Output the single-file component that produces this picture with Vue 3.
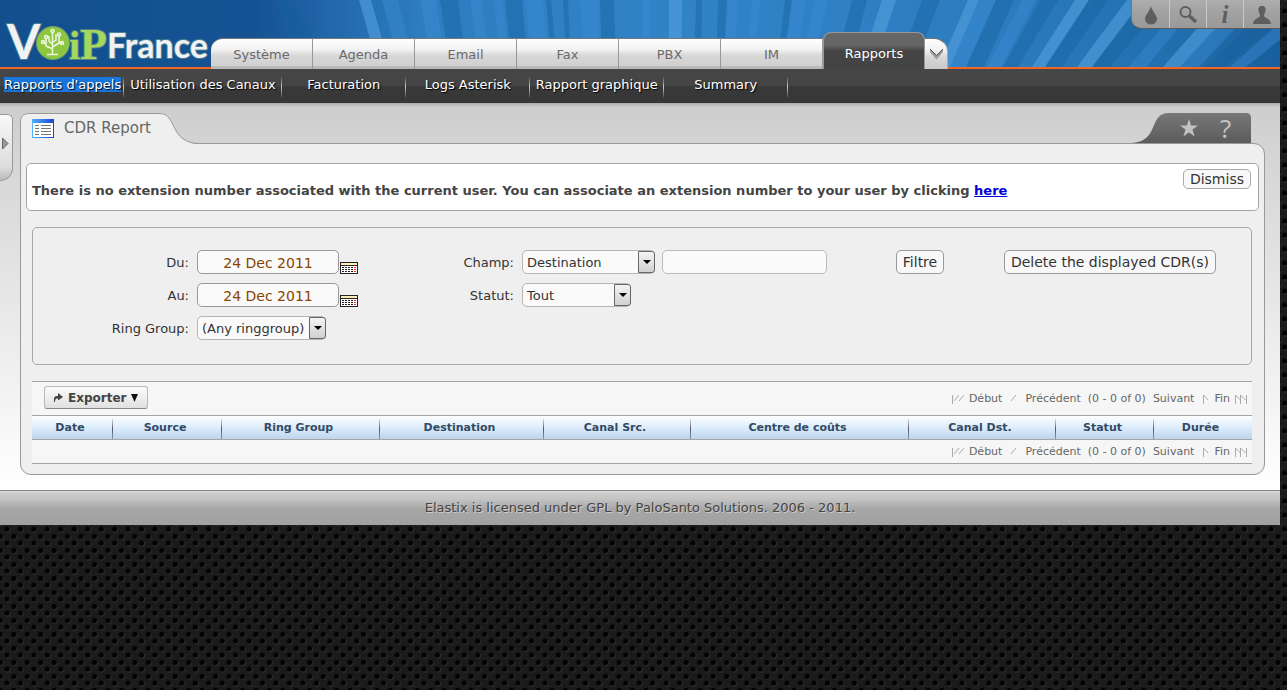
<script setup>
import { ref } from 'vue'

const tabs = ['Système', 'Agenda', 'Email', 'Fax', 'PBX', 'IM', 'Rapports']
const activeTab = 'Rapports'
const subItems = ["Rapports d'appels", 'Utilisation des Canaux', 'Facturation', 'Logs Asterisk', 'Rapport graphique', 'Summary']
const columns = [
  { name: 'Date', w: 81 },
  { name: 'Source', w: 109 },
  { name: 'Ring Group', w: 158 },
  { name: 'Destination', w: 164 },
  { name: 'Canal Src.', w: 147 },
  { name: 'Centre de coûts', w: 218 },
  { name: 'Canal Dst.', w: 147 },
  { name: 'Statut', w: 98 },
  { name: 'Durée', w: 98 }
]
const total = columns.reduce((sum, c) => sum + c.w, 0)

// Rays of the banner: left/right edge at the top, left/right edge at the bottom, tone
const rays = [
  [275, 292, 312, 330, 'd'], [359, 371, 378, 390, 'b'], [382, 398, 400, 414, 'l'],
  [420, 436, 432, 446, 'l'], [440, 458, 450, 466, 'd'], [470, 482, 480, 490, 'l'], [494, 502, 502, 510, 'l'],
  [505, 522, 512, 528, 'd'], [525, 543, 532, 549, 'l'], [546, 551, 552, 557, 'd'], [563, 568, 567, 571, 'd'],
  [580, 598, 584, 600, 'l'], [600, 614, 602, 616, 'd'], [643, 650, 643, 650, 'l'], [669, 682, 669, 681, 'b'],
  [696, 702, 694, 701, 'd'], [718, 727, 716, 723, 'd'], [728, 738, 724, 734, 'l'], [752, 760, 746, 754, 'l'],
  [785, 792, 777, 783, 'd'], [792, 806, 783, 797, 'l'], [815, 828, 800, 812, 'l'], [852, 867, 835, 850, 'd'],
  [882, 896, 860, 874, 'b'], [922, 940, 898, 914, 'd'], [968, 979, 939, 950, 'b'], [979, 996, 950, 966, 'l'],
  [996, 1014, 966, 984, 'd'], [1022, 1036, 987, 1001, 'l'], [1040, 1058, 1003, 1018, 'd'],
  [1075, 1089, 1032, 1045, 'b'], [1089, 1108, 1045, 1062, 'd'], [1127, 1143, 1077, 1092, 'b'],
  [1143, 1166, 1092, 1110, 'd'], [1185, 1202, 1129, 1146, 'l'], [1222, 1242, 1163, 1180, 'b'],
  [1242, 1262, 1180, 1199, 'l'], [1276, 1300, 1206, 1224, 'd'], [1305, 1330, 1230, 1246, 'l'], [1330, 1370, 1246, 1280, 'd']
]
const points = (r) => `${r[0]},0 ${r[1]},0 ${r[3]},67 ${r[2]},67`

const from = ref('24 Dec 2011')
const to = ref('24 Dec 2011')
const ringGroup = ref('(Any ringgroup)')
const field = ref('Destination')
const pattern = ref('')
const status = ref('Tout')
</script>

<template>
  <div class="backdrop">
    <svg class="mesh" aria-hidden="true">
      <defs>
        <pattern id="holes" width="13.45" height="14" patternUnits="userSpaceOnUse" y="522">
          <rect width="14" height="14" fill="#1b1b1b" />
          <circle cx="7.7" cy="7.7" r="2.8" fill="#303030" />
          <circle cx="7" cy="7" r="2.6" fill="#020202" />
          <circle cx="1" cy="1" r="2.8" fill="#303030" />
          <circle cx="0.3" cy="0.3" r="2.6" fill="#020202" />
          <circle cx="13.7" cy="0.3" r="2.6" fill="#020202" />
          <circle cx="0.3" cy="14.3" r="2.6" fill="#020202" />
          <circle cx="13.7" cy="14.3" r="2.6" fill="#020202" />
        </pattern>
      </defs>
      <rect width="100%" height="100%" fill="url(#holes)" />
    </svg>

    <div class="page">
      <header class="banner">
        <svg class="rays" viewBox="0 0 1280 67" preserveAspectRatio="none" aria-hidden="true">
          <polygon v-for="(r, i) in rays" :key="i" :points="points(r)" :class="r[4]" />
        </svg>
        <h1 class="logo">
          <svg width="211" height="67" viewBox="0 0 211 67" role="img" aria-label="VoiP France">
            <circle cx="53" cy="43" r="17" fill="#6d9f74" />
            <circle cx="53" cy="43" r="16" fill="#8dc63f" />
            <g fill="none" stroke="#eef7e2" stroke-width="1.5">
              <path d="M52.500 54V32M47 54.500H58M52.500 49L46 46V38M46 43H43M52.500 47L59 43V36M59 43H62M49 36V41L52 44M56 34V40L53 42" />
              <circle cx="52.500" cy="31" r="1.500" /><circle cx="43" cy="42" r="1.500" /><circle cx="46" cy="37" r="1.500" />
              <circle cx="59" cy="34.500" r="1.500" /><circle cx="62" cy="43" r="1.500" />
            </g>
            <g class="logo-text">
              <text x="7" y="59" class="lv">V</text>
              <text x="69" y="59" class="li">i</text>
              <text x="80" y="59" class="lp">P</text>
              <text x="107" y="58" class="lf">France</text>
            </g>
          </svg>
        </h1>
        <nav class="tabs">
          <a v-for="t in tabs" :key="t" href="#" class="tab" :class="{ active: t === activeTab }">{{ t }}</a>
          <button class="more" aria-label="Plus">
            <svg width="15" height="13" viewBox="0 0 15 13"><path d="M1 1V4L7.500 11.500L14 4V1L7.500 7.500Z" fill="#999" /><path d="M1 1L7.500 7.500L14 1" fill="none" stroke="#555" /></svg>
          </button>
        </nav>
        <div class="tools">
          <button aria-label="Thème"><svg width="20" height="22" viewBox="0 0 20 22"><path d="M10 2C11 7 16 11 16 15A6 5.500 0 0 1 4 15C4 11 9 7 10 2Z" fill="#5e5e5e" /></svg></button>
          <button aria-label="Rechercher"><svg width="20" height="22" viewBox="0 0 20 22"><circle cx="7.500" cy="8" r="5" fill="none" stroke="#5e5e5e" stroke-width="2" /><path d="M11.500 12L18 18" stroke="#5e5e5e" stroke-width="3.500" /></svg></button>
          <button aria-label="Informations"><span class="info">i</span></button>
          <button aria-label="Utilisateur"><svg width="20" height="22" viewBox="0 0 20 22"><path d="M10 2C13 2 14 4 13.500 7C13 9 12 10 12 12C13 14 19 15 19 20H1C1 15 7 14 8 12C8 10 7 9 6.500 7C6 4 7 2 10 2Z" fill="#5e5e5e" /></svg></button>
        </div>
      </header>

      <nav class="subnav">
        <a v-for="(s, i) in subItems" :key="s" href="#"><span :class="{ selected: i === 0 }">{{ s }}</span></a>
      </nav>

      <main class="body">
        <button class="handle" aria-label="Ouvrir le panneau">
          <svg width="7" height="13" viewBox="0 0 7 13"><path d="M.5 1L6 6.500L.5 12Z" fill="#999" stroke="#666" /></svg>
        </button>

        <section class="module">
          <div class="title">
            <svg class="title-shape" width="180" height="32" viewBox="0 0 180 32" aria-hidden="true">
              <path d="M0 32V9Q0 0 9 0H140C157 0 149 31 180 31V32Z" fill="#efefef" />
              <path d="M.5 32V9Q.5 .5 9 .5H140C157 .5 149 30.500 180 30.500" fill="none" stroke="#999" />
            </svg>
            <svg class="list-icon" width="22" height="19" viewBox="0 0 22 19" aria-hidden="true">
              <defs><linearGradient id="bar"><stop stop-color="#55b0f8" /><stop offset="1" stop-color="#1446d8" /></linearGradient></defs>
              <rect x=".5" y=".5" width="21" height="18" fill="#fff" stroke="url(#bar)" />
              <rect width="22" height="4" fill="url(#bar)" />
              <path d="M3 6.500H7M9 6.500H19M3 9.500H7M9 9.500H19M3 12.500H7M9 12.500H19M3 15.500H7M9 15.500H19" stroke="#777" />
            </svg>
            <h2>CDR Report</h2>
            <div class="actions">
              <svg class="actions-shape" width="119" height="30" viewBox="0 0 119 30" aria-hidden="true">
                <defs><linearGradient id="dark" x2="0" y2="1"><stop stop-color="#777" /><stop offset="1" stop-color="#5c5c5c" /></linearGradient></defs>
                <path d="M0 30C28 28 16 0 37 0H114Q119 0 119 5V30Z" fill="url(#dark)" />
              </svg>
              <button aria-label="Favori"><svg width="18" height="18" viewBox="0 0 18 18"><path d="M9 0L11.200 6.600H18L12.500 10.600L14.600 17.400L9 13.200L3.400 17.400L5.500 10.600L0 6.600H6.800Z" fill="#c2c2c2" /></svg></button>
              <button aria-label="Aide"><span class="help">?</span></button>
            </div>
          </div>

          <div class="panel">
            <div class="notice">
              <p>There is no extension number associated with the current user. You can associate an extension number to your user by clicking <a href="#">here</a></p>
              <button class="btn dismiss">Dismiss</button>
            </div>

            <form class="filter" @submit.prevent>
              <label class="c1" for="from">Du:</label>
              <div class="c2">
                <input id="from" v-model="from" class="date" type="text">
                <button class="cal" type="button" aria-label="Calendrier Du"><svg width="18" height="12" viewBox="0 0 18 12"><rect x=".5" y=".5" width="17" height="11" fill="#fff" stroke="#222" /><rect x="1" y="1" width="16" height="2" fill="#ffeebb" /><path d="M1 3.500H17" stroke="#222" /><path d="M2 5.500H14M2 7.500H14M2 9.500H14" stroke="#222" stroke-dasharray="2 1" /><path d="M14 5.500H16M14 7.500H16M14 9.500H16" stroke="#f22" /></svg></button>
              </div>
              <label class="c3" for="field">Champ:</label>
              <div class="c4">
                <span class="select wide"><select id="field" v-model="field"><option>Destination</option></select><i /></span>
                <input v-model="pattern" class="pattern" type="text" aria-label="Valeur">
              </div>
              <div class="c5"><button class="btn">Filtre</button></div>
              <div class="c6"><button class="btn" type="button">Delete the displayed CDR(s)</button></div>

              <label class="c1" for="to">Au:</label>
              <div class="c2">
                <input id="to" v-model="to" class="date" type="text">
                <button class="cal" type="button" aria-label="Calendrier Au"><svg width="18" height="12" viewBox="0 0 18 12"><rect x=".5" y=".5" width="17" height="11" fill="#fff" stroke="#222" /><rect x="1" y="1" width="16" height="2" fill="#ffeebb" /><path d="M1 3.500H17" stroke="#222" /><path d="M2 5.500H14M2 7.500H14M2 9.500H14" stroke="#222" stroke-dasharray="2 1" /><path d="M14 5.500H16M14 7.500H16M14 9.500H16" stroke="#f22" /></svg></button>
              </div>
              <label class="c3" for="status">Statut:</label>
              <div class="c4"><span class="select small"><select id="status" v-model="status"><option>Tout</option></select><i /></span></div>

              <label class="c1" for="ring">Ring Group:</label>
              <div class="c2"><span class="select medium"><select id="ring" v-model="ringGroup"><option>(Any ringgroup)</option></select><i /></span></div>
            </form>

            <div class="grid">
              <div class="bar top">
                <button class="export">
                  <svg width="10" height="9" viewBox="0 0 10 9"><path d="M1 9V6Q1 3 4 3H5V0L10 4L5 7.500V5.500H4Q2 5.500 2 9Z" fill="#444" /></svg>
                  Exporter
                  <svg width="7" height="8" viewBox="0 0 7 8"><path d="M0 0H7L3.500 8Z" fill="#111" /></svg>
                </button>
                <div class="pager">
                  <svg width="13" height="10" viewBox="0 0 13 10"><path d="M.5 1V10M2 7L7 1M7 7L12 1" fill="none" stroke="#aaa" /></svg>
                  <a href="#" class="first">Début</a>
                  <svg width="7" height="10" viewBox="0 0 7 10"><path d="M1 7L6 1" fill="none" stroke="#aaa" /></svg>
                  <span class="range"><a href="#">Précédent</a><span>(0 - 0 of 0)</span><a href="#">Suivant</a></span>
                  <svg class="next" width="6" height="10" viewBox="0 0 6 10"><path d="M.5 10V1L5 6" fill="none" stroke="#aaa" /></svg>
                  <a href="#" class="last">Fin</a>
                  <svg width="12" height="10" viewBox="0 0 12 10"><path d="M.5 10V1L5.500 6V10M5.500 6V1L10.500 6M11.500 1V10" fill="none" stroke="#aaa" /></svg>
                </div>
              </div>
              <table>
                <thead>
                  <tr><th v-for="c in columns" :key="c.name" scope="col" :style="{ width: (c.w / total) * 100 + '%' }">{{ c.name }}</th></tr>
                </thead>
              </table>
              <div class="bar bottom">
                <div class="pager">
                  <svg width="13" height="10" viewBox="0 0 13 10"><path d="M.5 1V10M2 7L7 1M7 7L12 1" fill="none" stroke="#aaa" /></svg>
                  <a href="#" class="first">Début</a>
                  <svg width="7" height="10" viewBox="0 0 7 10"><path d="M1 7L6 1" fill="none" stroke="#aaa" /></svg>
                  <span class="range"><a href="#">Précédent</a><span>(0 - 0 of 0)</span><a href="#">Suivant</a></span>
                  <svg class="next" width="6" height="10" viewBox="0 0 6 10"><path d="M.5 10V1L5 6" fill="none" stroke="#aaa" /></svg>
                  <a href="#" class="last">Fin</a>
                  <svg width="12" height="10" viewBox="0 0 12 10"><path d="M.5 10V1L5.500 6V10M5.500 6V1L10.500 6M11.500 1V10" fill="none" stroke="#aaa" /></svg>
                </div>
              </div>
            </div>
          </div>
        </section>
      </main>

      <footer class="footer">Elastix is licensed under GPL by PaloSanto Solutions. 2006 - 2011.</footer>
    </div>
  </div>
</template>

<style>
html, body { background: #1b1b1b; }
</style>

<style scoped>
.backdrop, .backdrop * { box-sizing: border-box; }
.backdrop { position: relative; min-height: 100vh; font-family: Verdana, "DejaVu Sans", sans-serif; font-size: 13px; color: #333; }
.mesh { position: absolute; inset: 0; width: 100%; height: 100%; }
.page { position: relative; margin-right: 7px; }
button, input, select { font-family: inherit; margin: 0; }
button { padding: 0; border: 0; background: none; cursor: pointer; color: inherit; }
a { color: inherit; text-decoration: none; }
svg { display: block; flex: none; }

.banner { position: relative; display: flex; align-items: flex-end; height: 69px; border-bottom: 2px solid #f26522; background: linear-gradient(90deg, #134f8e 0, #155394 20%, #2268ab 26%, #2d7dc0 33%, #3183c8 54%, #2c7cbf 78%, #2370b0 90%, #1c619e 100%); }
.rays { position: absolute; inset: 0; width: 100%; height: 67px; }
.rays .l { fill: #3d8fd6; opacity: .4; }
.rays .b { fill: #55a0de; opacity: .6; }
.rays .d { fill: #14609c; opacity: .4; }
.logo { position: relative; margin: 0; width: 211px; height: 67px; }
.logo svg { overflow: visible; }
.logo-text { paint-order: stroke; stroke: #4d8090; stroke-width: 2px; stroke-linejoin: round; }
.lv { font: 700 48px Lato, sans-serif; fill: #f0f2f4; }
.li { font: 700 40px "Liberation Serif", serif; fill: #a5d75c; }
.lp { font: 700 44px "Liberation Serif", serif; fill: #a5d75c; }
.lf { font: 700 34px Lato, sans-serif; fill: #f0f2f4; }

.tabs { position: relative; display: flex; align-items: flex-end; margin-bottom: -2px; }
.tab { width: 102px; height: 31px; line-height: 32px; text-align: center; color: #6a6a6a; background: linear-gradient(#fff 0, #f2f2f2 35%, #d8d8d8 55%, #d0d0d0 90%, #b8b8b8 92%); border-top: 1px solid #777; border-right: 1px solid #999; }
.tab:first-child { border-top-left-radius: 12px; }
.tab.active { height: 37px; line-height: 42px; color: #fff; background: linear-gradient(#686868 0, #646464 35%, #444 50%); border: 1px solid #999; border-bottom: 0; border-radius: 8px 8px 0 0; }
.more { width: 23px; height: 31px; display: flex; align-items: center; justify-content: center; background: linear-gradient(#fff 0, #f2f2f2 35%, #d8d8d8 60%, #c8c8c8); border-top: 1px solid #777; border-right: 1px solid #aaa; border-top-right-radius: 14px; }
.tools { position: absolute; top: 0; right: 0; display: flex; height: 29px; background: linear-gradient(#adadad, #a2a2a2 45%, #999); border-left: 1px solid #777; border-bottom: 1px solid #5a5a5a; border-bottom-left-radius: 10px; }
.tools button { width: 38px; display: flex; align-items: center; justify-content: center; padding-top: 1px; border-right: 1px solid #c8c8c8; }
.tools button:nth-child(n+2) { width: 37px; }
.tools button:last-child { width: 36px; border: 0; }
.info { font: italic 700 25px/26px "Liberation Serif", serif; color: #5e5e5e; }

.subnav { display: flex; height: 34px; background: linear-gradient(#464646, #444 48%, #393939 52%, #363636); color: #fff; text-shadow: 1px 1px 1px #000; }
.subnav a { position: relative; min-width: 124px; padding: 8px 6px 0; line-height: 16px; text-align: center; white-space: nowrap; }
.subnav a:first-child { padding: 8px 3px 0 4px; }
.subnav a::after { content: ""; position: absolute; right: 0; top: 7px; width: 1px; height: 22px; background: linear-gradient(#444, #ccc 50%, #444); }
.selected { background: #1a75dc; }

.body { position: relative; padding: 10px 15px 15px 20px; border-bottom: 1px solid #808080; background: linear-gradient(#aaa 0, #cdcdcd 4px, #d2d2d2 30px, #fff 100%); }
.handle { position: absolute; left: 0; top: 11px; width: 13px; height: 67px; padding: 0 0 8px 2px; background: linear-gradient(#f8f8f8, #ddd 80%, #bbb); border: 1px solid #999; border-left: 0; border-radius: 0 6px 14px 0; }
.title { position: relative; display: flex; align-items: center; height: 30px; padding: 0 14px 0 12px; }
.title-shape { position: absolute; left: 0; top: 0; z-index: 1; }
.list-icon { position: relative; z-index: 2; }
.title h2 { position: relative; z-index: 2; margin: 0 auto 0 10px; font-size: 15px; font-weight: 400; line-height: 20px; color: #666; }
.actions { position: relative; display: flex; align-items: center; width: 119px; height: 30px; padding-left: 48px; gap: 22px; }
.actions-shape { position: absolute; left: 0; top: 0; }
.actions button { position: relative; }
.help { display: block; font: 26px/28px "Noto Sans", sans-serif; color: #c2c2c2; }

.panel { padding: 19px 5px 10px; background: #efefef; border: 1px solid #999; border-radius: 0 11px 11px 11px; }
.notice { display: flex; align-items: flex-start; justify-content: space-between; height: 48px; padding: 5px 7px 5px 5px; background: #fff; border: 1px solid #a5a5a5; border-radius: 5px; }
.notice p { margin: 12px 0 0; font-weight: 700; line-height: 19px; color: #444; }
.notice a { color: #0000dd; text-decoration: underline; }
.btn { height: 24px; padding: 0 6px; font-size: 14px; color: #333; background: #f8f8f8; border: 1px solid #999; border-radius: 5px; white-space: nowrap; }
.dismiss { height: 20px; line-height: 18px; border-color: #aaa; }

.filter { display: grid; grid-template-columns: 156fr 228fr 81fr 338fr 104fr 260fr; grid-auto-rows: 24px; gap: 9px 8px; align-items: center; margin: 16px 7px 0 6px; padding: 22px 11px 24px 0; border: 1px solid #a8a8a8; border-radius: 5px; }
.c1 { grid-column: 1; text-align: right; }
.c2 { grid-column: 2; display: flex; align-items: flex-end; gap: 1px; }
.c3 { grid-column: 3; text-align: right; }
.c4 { grid-column: 4; display: flex; gap: 7px; }
.c5 { grid-column: 5; text-align: center; }
.c6 { grid-column: 6; text-align: center; }
.filter input { height: 24px; background: #fafafa; border: 1px solid #999; border-radius: 5px; }
.filter .date { width: 142px; padding: 1px 0 0; text-align: center; font-size: 14px; color: #884400; }
.filter .pattern { width: 165px; border-color: #bbb; }
.select { position: relative; display: block; height: 24px; }
.select select { appearance: none; width: 100%; height: 24px; padding: 0 20px 0 4px; font-size: 13px; color: #333; background: #fafafa; border: 1px solid #b5b5b5; border-radius: 5px; }
.select i { position: absolute; right: 0; top: 1px; width: 17px; height: 22px; background: linear-gradient(#f4f4f4, #d0d0d0); border: 1px solid #666; border-radius: 0 3px 3px 0; pointer-events: none; }
.select i::after { content: ""; position: absolute; left: 4px; top: 8px; border: 4px solid transparent; border-top-color: #000; border-bottom: 0; }
.wide { width: 133px; }
.small { width: 109px; }
.medium { width: 129px; }
.cal { display: block; height: 12px; }

.grid { margin: 16px 7px 0 6px; border-top: 1px solid #a5a5a5; border-bottom: 1px solid #a5a5a5; }
.bar { display: flex; align-items: center; background: #f6f6f6; }
.top { height: 33px; padding: 0 5px 0 12px; }
.bottom { height: 23px; padding: 0 5px; }
.export { display: flex; align-items: center; gap: 5px; height: 23px; margin-bottom: 2px; padding: 0 9px 0 8px; font-size: 12px; font-weight: 700; color: #444; background: linear-gradient(#fcfcfc, #e0e0e0); border: 1px solid #bbb; border-bottom-color: #888; border-radius: 3px; }
.pager { display: flex; align-items: center; margin-left: auto; font-size: 11px; line-height: 14px; color: #666; white-space: nowrap; }
.first { margin: 0 8px 0 4px; }
.range { display: flex; gap: 7px; margin: 0 9px 0 8px; }
.last { margin: 0 5px; }
table { width: 100%; table-layout: fixed; border-collapse: collapse; border-top: 1px solid #a5a5a5; border-bottom: 1px solid #a5a5a5; background: linear-gradient(#fff, #dcecfc 50%, #bcd4ec); }
th { position: relative; height: 24px; padding: 0 5px 0 0; font-size: 11px; line-height: 14px; font-weight: 700; color: #324a64; }
th:not(:last-child)::after { content: ""; position: absolute; right: 0; top: 3px; width: 1px; height: 20px; background: linear-gradient(#d5dde5, #556, #8a9cb0); }

.footer { height: 34px; line-height: 33px; text-align: center; color: #444; text-shadow: 1px 1px 0 #ccc; background: linear-gradient(#e0e0e0 0, #ccc 2px, #c4c4c4 8px, #a6a6a6 18px, #a1a1a1); }
</style>
